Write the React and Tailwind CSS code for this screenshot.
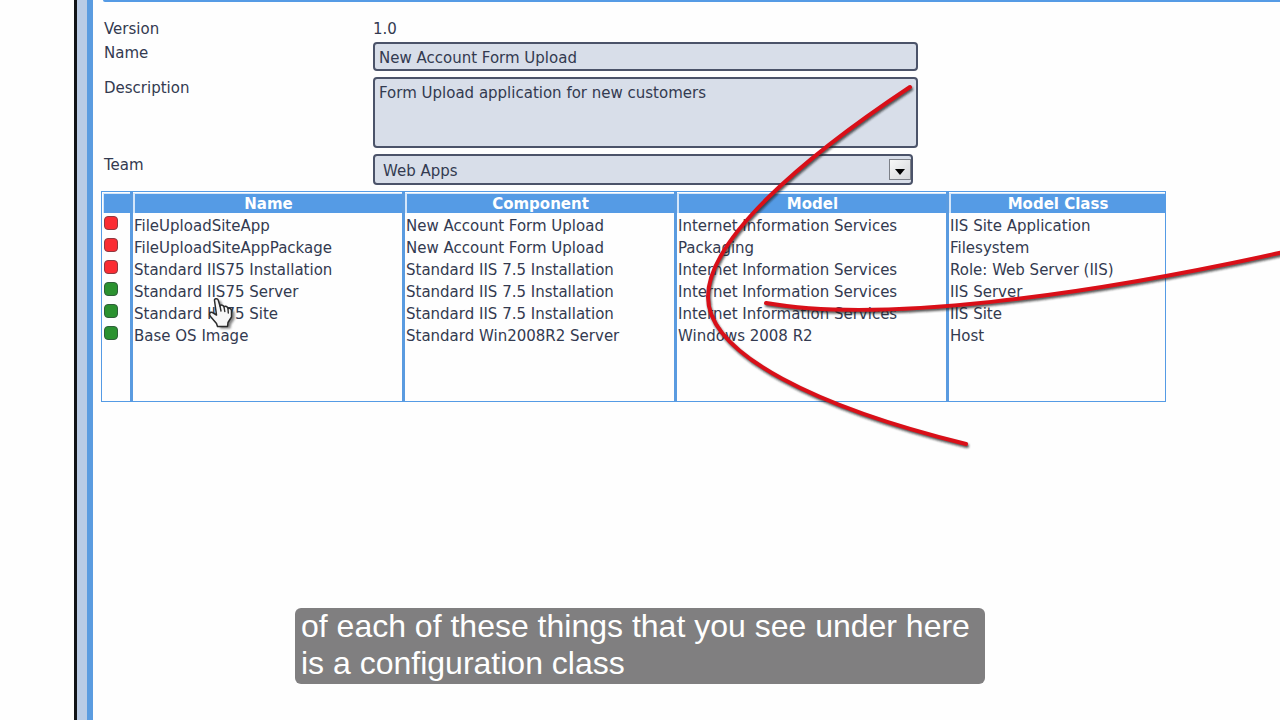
const rows = [
  ["red", "FileUploadSiteApp", "New Account Form Upload", "Internet Information Services", "IIS Site Application"],
  ["red", "FileUploadSiteAppPackage", "New Account Form Upload", "Packaging", "Filesystem"],
  ["red", "Standard IIS75 Installation", "Standard IIS 7.5 Installation", "Internet Information Services", "Role: Web Server (IIS)"],
  ["green", "Standard IIS75 Server", "Standard IIS 7.5 Installation", "Internet Information Services", "IIS Server"],
  ["green", "Standard IIS75 Site", "Standard IIS 7.5 Installation", "Internet Information Services", "IIS Site"],
  ["green", "Base OS Image", "Standard Win2008R2 Server", "Windows 2008 R2", "Host"],
];

const field =
  "block w-full resize-none appearance-none rounded border-2 border-[#4b5369] bg-[#d8dee9] outline-none";

function Status({ color }) {
  return (
    <span
      role="img"
      aria-label={color}
      className={
        "block size-[14px] rounded border " +
        (color === "red" ? "border-[#8c3a42] bg-[#fb2c33]" : "border-[#2f5f3a] bg-[#2b9230]")
      }
    />
  );
}

function Row({ label, id, children, width = "max-w-[545px]" }) {
  return (
    <div className="flex">
      <label htmlFor={id} className="w-[270px] shrink-0 pl-px leading-[22px]">
        {label}
      </label>
      <div className={"relative grow " + width}>{children}</div>
    </div>
  );
}

function DetailsForm() {
  return (
    <form className="flex flex-col gap-[6px]">
      <div className="flex flex-col gap-[2px]">
        <Row label="Version" id="version">
          <output id="version" className="block leading-[22px]">1.0</output>
        </Row>
        <Row label="Name" id="name">
          <input id="name" className={field + " h-[29px] px-1 pt-[2px]"} defaultValue="New Account Form Upload" />
        </Row>
      </div>
      <Row label="Description" id="description">
        <textarea
          id="description"
          className={field + " h-[71px] px-1 py-[3px] leading-[22px]"}
          defaultValue="Form Upload application for new customers"
        />
      </Row>
      <Row label="Team" id="team" width="max-w-[540px]">
        <select id="team" className={field + " h-[31px] pt-1 pr-8 pl-2"}>
          <option>Web Apps</option>
        </select>
        <span className="pointer-events-none absolute inset-y-[5px] right-[2px] flex w-[22px] items-center justify-center border border-[#7c8088] bg-gradient-to-br from-[#f8f8f8] to-[#d5d7da]">
          <svg className="mt-[4px] h-[6px] w-[10px]" viewBox="0 0 10 6" aria-hidden="true">
            <path d="M0 0h10L5 6z" fill="#000" />
          </svg>
        </span>
      </Row>
    </form>
  );
}

function ComponentTable() {
  const line = "border-l-[3px] border-[#5a9be0] ";
  return (
    <div className="w-full max-w-[1065px] border border-[#559be5]">
      <table className="w-full table-fixed border-separate border-spacing-0">
        <colgroup>
          <col className="w-7" />
          <col className="w-[272px]" />
          <col className="w-[272px]" />
          <col className="w-[272px]" />
          <col />
        </colgroup>
        <thead>
          <tr className="font-bold text-white">
            <th className="p-0 pt-px pl-px" aria-label="Status">
              <div className="h-5 border-t border-l border-[#d4e6fa] bg-[#559be5]" />
            </th>
            {["Name", "Component", "Model", "Model Class"].map((h) => (
              <th key={h} className={line + "p-0 pt-px"}>
                <div className="h-5 border-t border-l-2 border-[#d4e6fa] bg-[#559be5] leading-5">{h}</div>
              </th>
            ))}
          </tr>
        </thead>
        <tbody>
          {rows.map(([color, ...cells]) => (
            <tr key={cells[0]} className="h-[22px]">
              <td className="p-0 pb-[2px] pl-[2px] align-middle">
                <Status color={color} />
              </td>
              {cells.map((c, i) => (
                <td key={i} className={line + "p-0 pt-1 pl-px leading-[18px] whitespace-nowrap"}>
                  {c}
                </td>
              ))}
            </tr>
          ))}
          <tr className="h-14">
            <td />
            <td className={line} />
            <td className={line} />
            <td className={line} />
            <td className={line} />
          </tr>
        </tbody>
      </table>
    </div>
  );
}

function Annotations() {
  const strokes = [
    "M910 87C800 160 708 240 708 297C708 355 820 408 966 444",
    "M766 303C880 323 1080 297 1284 252",
  ];
  const hand =
    "M8.5 4.5C8 2.5 11.5 2 12.2 4L14 10C15 8.5 17.5 9 18 10.8C19.5 9.8 21.5 10.6 22 12.5C23.5 11.8 25.5 12.8 25.5 15V21L22 26.5L21.5 30.5H11.5L10.5 27.5L4.5 20.5C2.5 17.5 4 15.5 6.500 16.5L10.5 19Z";
  return (
    <svg
      className="pointer-events-none absolute top-0 left-0 h-[720px] w-[1280px] max-w-none"
      viewBox="0 0 1280 720"
      fill="none"
      strokeLinecap="round"
      aria-hidden="true"
    >
      <defs>
        <filter id="soft" x="-20%" y="-20%" width="140%" height="140%">
          <feGaussianBlur stdDeviation="1" />
        </filter>
      </defs>
      {strokes.map((d) => (
        <g key={d}>
          <path d={d} stroke="#222" strokeOpacity="0.75" strokeWidth="4" transform="translate(1 2)" filter="url(#soft)" />
          <path d={d} stroke="#d90f18" strokeWidth="4" />
        </g>
      ))}
      <g transform="translate(206 296)" strokeLinejoin="round">
        <path d={hand} fill="#333" opacity="0.6" transform="translate(3 2)" filter="url(#soft)" />
        <path d={hand} fill="#f7f7f7" stroke="#2b2b2b" strokeWidth="1.5" />
        <path d="M14 10l1 5M18 11l.8 4.5M22 13l.3 4" stroke="#2b2b2b" strokeWidth="1.4" />
      </g>
    </svg>
  );
}

export default function App() {
  return (
    <div className="relative flex min-h-screen overflow-hidden bg-[#fefefe] pl-[74px] font-['DejaVu_Sans',sans-serif] text-[15px] text-[#333a50]">
      <div className="flex shrink-0">
        <div className="w-[3px] bg-[#111418]" />
        <div className="w-[10px] bg-[#b9cce6]" />
        <div className="w-[6px] bg-[#5b9ce0]" />
      </div>
      <main className="min-w-0 grow pl-2">
        <div className="ml-[2px] h-[2px] rounded-bl bg-[#559be5]" />
        <div className="flex flex-col gap-[6px] pt-4">
          <div className="pl-[2px]">
            <DetailsForm />
          </div>
          <ComponentTable />
        </div>
      </main>
      <Annotations />
      <p className="absolute bottom-9 left-1/2 w-[690px] -translate-x-1/2 rounded-md bg-[#807f80] px-[6px] pb-[2px] font-['Liberation_Sans',Arial,sans-serif] text-[32px] leading-[37px] text-white">
        of each of these things that you see under here is a configuration class
      </p>
    </div>
  );
}
